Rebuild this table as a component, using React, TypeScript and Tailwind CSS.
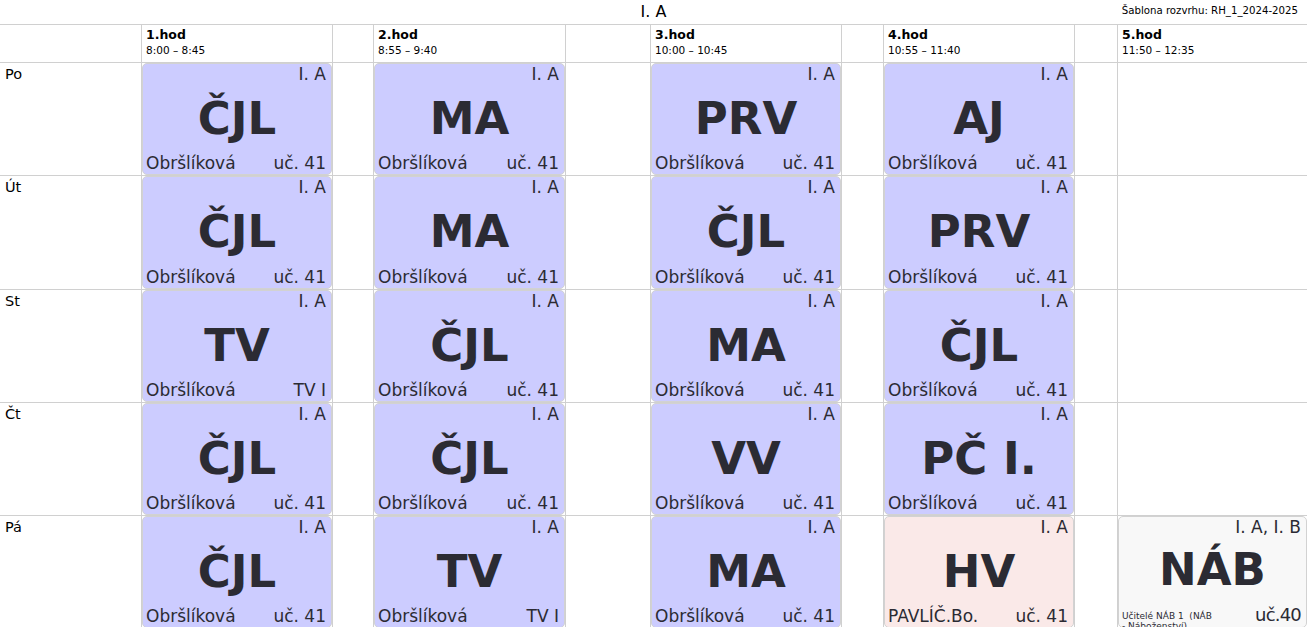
import React from "react";

type Lesson = {
  subj: string;
  teacher: string;
  room: string;
  cls?: string;
  kind?: "normal" | "pink" | "gray";
};

const L = (subj: string, room = "uč. 41", teacher = "Obršlíková"): Lesson => ({ subj, room, teacher });

const days: { name: string; lessons: (Lesson | null)[] }[] = [
  { name: "Po", lessons: [L("ČJL"), L("MA"), L("PRV"), L("AJ"), null] },
  { name: "Út", lessons: [L("ČJL"), L("MA"), L("ČJL"), L("PRV"), null] },
  { name: "St", lessons: [L("TV", "TV I"), L("ČJL"), L("MA"), L("ČJL"), null] },
  { name: "Čt", lessons: [L("ČJL"), L("ČJL"), L("VV"), L("PČ I."), null] },
  {
    name: "Pá",
    lessons: [
      L("ČJL"),
      L("TV", "TV I"),
      L("MA"),
      { subj: "HV", teacher: "PAVLÍČ.Bo.", room: "uč. 41", kind: "pink" },
      { subj: "NÁB", teacher: "Učitelé NÁB 1  (NÁB - Náboženství)", room: "uč.40", cls: "I. A, I. B", kind: "gray" },
    ],
  },
];

const hours = [
  ["1.hod", "8:00 – 8:45"],
  ["2.hod", "8:55 – 9:40"],
  ["3.hod", "10:00 – 10:45"],
  ["4.hod", "10:55 – 11:40"],
  ["5.hod", "11:50 – 12:35"],
];

function Card({ l }: { l: Lesson }) {
  const bg =
    l.kind === "pink" ? "bg-[#fae9e8]" : l.kind === "gray" ? "bg-[#f8f8f8]" : "bg-[#ccccff]";
  return (
    <div
      className={`h-full w-full rounded-[5px] border border-[#d2d2d2] ${bg} flex flex-col text-[#2b2b33] overflow-hidden`}
    >
      <div className="text-right text-[17px] leading-none pt-[2px] pr-[5px]">{l.cls ?? "I. A"}</div>
      <div className="flex-1 flex items-center justify-center font-bold text-[45px] leading-none pb-[2px]">
        {l.subj}
      </div>
      {l.kind === "gray" ? (
        <div className="flex justify-between items-end pl-[3px] pr-[5px] h-[22px]">
          <div className="text-[9px] leading-[10px] w-[96px] self-start whitespace-pre-wrap pt-[6px]">
            {l.teacher}
          </div>
          <div className="text-[18px] tracking-[-0.8px] leading-none pb-[3px]">{l.room}</div>
        </div>
      ) : (
        <div className="flex justify-between items-end pl-[3px] pr-[5px] text-[17px] leading-none pb-[2px]">
          <span>{l.teacher}</span>
          <span>{l.room}</span>
        </div>
      )}
    </div>
  );
}

export default function App() {
  const line = "border-[#d0d0d0]";
  const renderRowCells = (items: (React.ReactNode | null)[]) => {
    const out: React.ReactNode[] = [];
    items.forEach((it, i) => {
      out.push(
        <div key={`c${i}`} className={`border-l border-t ${line} min-w-0`}>
          {it}
        </div>
      );
      if (i < items.length - 1) {
        out.push(<div key={`g${i}`} className={`border-l border-t ${line}`} />);
      }
    });
    return out;
  };

  return (
    <div
      className="w-[1307px] h-[627px] overflow-hidden bg-white text-black"
      style={{ fontFamily: "'DejaVu Sans', 'Noto Sans', sans-serif" }}
    >
      <div className="relative h-[24px] flex items-center justify-center">
        <span className="text-[16px] leading-none">I. A</span>
        <span className="absolute right-[9px] top-[6px] text-[10.2px] leading-none">
          Šablona rozvrhu: RH_1_2024-2025
        </span>
      </div>
      <div className="grid grid-cols-[141px_191px_41px_192px_85px_191px_42px_191px_43px_190px] grid-rows-[38px_113px_114px_113px_113px_113px]">
        <div className={`border-t ${line}`} />
        {renderRowCells(
          hours.map(([h, t]) => (
            <div className="pl-[4px] pt-[1px]">
              <div className="font-bold text-[12.5px] leading-[17px]">{h}</div>
              <div className="text-[10.5px] leading-[15px]">{t}</div>
            </div>
          ))
        )}
        {days.map((d) => (
          <React.Fragment key={d.name}>
            <div className={`border-t ${line} pl-[5px] pt-[2px] text-[14.5px] leading-[18px]`}>{d.name}</div>
            {renderRowCells(d.lessons.map((l) => (l ? <Card l={l} /> : null)))}
          </React.Fragment>
        ))}
      </div>
    </div>
  );
}
